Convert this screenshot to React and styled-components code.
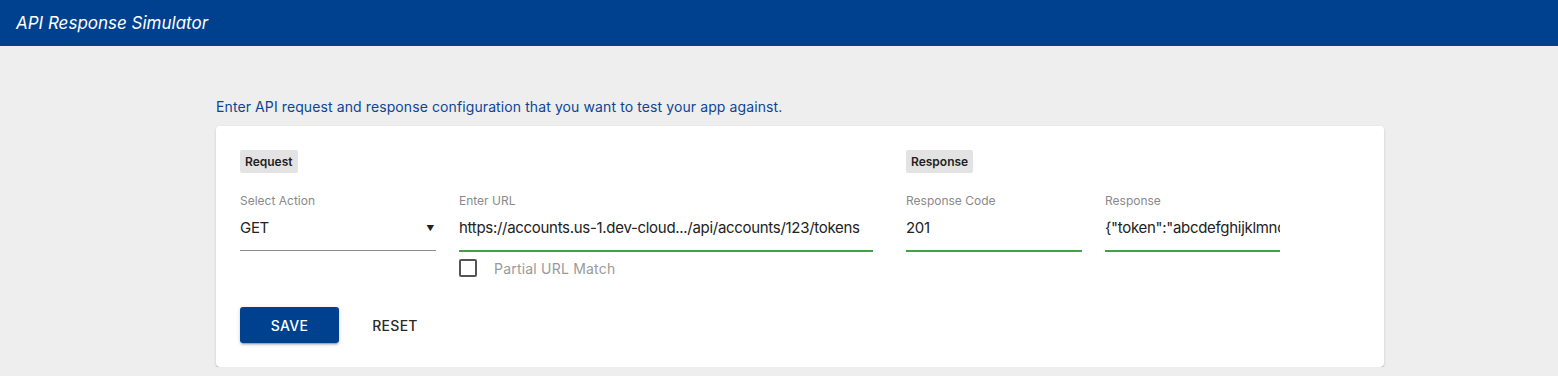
import React from 'react';
import styled, { createGlobalStyle } from 'styled-components';

const GlobalStyle = createGlobalStyle`
  body {
    margin: 0;
    background: #eeeeee;
    font-family: Inter, "Noto Sans", sans-serif;
    color: #222;
  }
`;

const Header = styled.header`
  height: 46px;
  background: #00418f;
  display: flex;
  align-items: center;
  padding-left: 16px;
`;

const Title = styled.h1`
  margin: 0;
  font-size: 17px;
  font-weight: 400;
  font-style: italic;
  color: #ffffff;
`;

const Main = styled.main`
  padding: 51px 0 0 216px;
`;

const Intro = styled.p`
  margin: 0 0 9px;
  font-size: 14px;
  line-height: 20px;
  letter-spacing: 0.1px;
  color: #0d4596;
`;

const Card = styled.section`
  width: 1168px;
  box-sizing: border-box;
  background: #ffffff;
  border-radius: 4px;
  padding: 24px;
  box-shadow: 0 2px 1px -1px rgba(0, 0, 0, 0.2), 0 1px 1px 0 rgba(0, 0, 0, 0.14),
    0 1px 3px 0 rgba(0, 0, 0, 0.12);
`;

const Sections = styled.div`
  display: flex;
  gap: 33px;
`;

const Section = styled.div`
  display: flex;
  flex-direction: column;
  align-items: flex-start;
`;

const Chip = styled.span`
  height: 23px;
  line-height: 23px;
  padding: 0 5px;
  background: #e3e3e3;
  border-radius: 2px;
  font-size: 12px;
  font-weight: 600;
  color: #1e1e1e;
`;

const Fields = styled.div`
  display: flex;
  gap: 23px;
  margin-top: 20px;
`;

const Field = styled.div`
  width: ${(p) => p.$width}px;
  display: flex;
  flex-direction: column;
`;

const Label = styled.label`
  font-size: 12px;
  line-height: 16px;
  color: #8a8a8a;
`;

const Value = styled.div`
  margin-top: 9px;
  padding-bottom: 12px;
  height: 20px;
  display: flex;
  align-items: center;
  justify-content: space-between;
  font-size: 15px;
  line-height: 20px;
  letter-spacing: -0.3px;
  color: #222;
  white-space: nowrap;
  overflow: hidden;
  border-bottom: ${(p) => (p.$focused ? '2px solid #43a047' : '1px solid #8c8c8c')};
`;

const Arrow = styled.span`
  font-size: 8px;
  color: #222;
  margin-right: 2px;
`;

const CheckRow = styled.label`
  display: flex;
  align-items: center;
  gap: 17px;
  margin-top: 7px;
  font-size: 14px;
  letter-spacing: 0.2px;
  color: #9a9a9a;
`;

const Box = styled.span`
  width: 14px;
  height: 14px;
  border: 2px solid #555;
  border-radius: 2px;
`;

const Actions = styled.div`
  display: flex;
  align-items: center;
  gap: 17px;
  margin-top: 30px;
`;

const Button = styled.button`
  height: 36px;
  min-width: ${(p) => (p.$primary ? '99px' : '78px')};
  padding: 0 16px;
  border: none;
  border-radius: 3px;
  font-family: inherit;
  font-size: 14px;
  font-weight: 500;
  letter-spacing: 0.3px;
  text-transform: uppercase;
  background: ${(p) => (p.$primary ? '#00418f' : 'transparent')};
  color: ${(p) => (p.$primary ? '#ffffff' : '#2a2a2a')};
  box-shadow: ${(p) =>
    p.$primary
      ? '0 3px 1px -2px rgba(0,0,0,0.2), 0 2px 2px 0 rgba(0,0,0,0.14), 0 1px 5px 0 rgba(0,0,0,0.12)'
      : 'none'};
`;

export default function App() {
  return (
    <>
      <GlobalStyle />
      <Header>
        <Title>API Response Simulator</Title>
      </Header>
      <Main>
        <Intro>Enter API request and response configuration that you want to test your app against.</Intro>
        <Card>
          <Sections>
            <Section>
              <Chip>Request</Chip>
              <Fields>
                <Field $width={196}>
                  <Label>Select Action</Label>
                  <Value>
                    GET
                    <Arrow>▼</Arrow>
                  </Value>
                </Field>
                <Field $width={414}>
                  <Label>Enter URL</Label>
                  <Value $focused>https://accounts.us-1.dev-cloud.../api/accounts/123/tokens</Value>
                  <CheckRow>
                    <Box />
                    Partial URL Match
                  </CheckRow>
                </Field>
              </Fields>
            </Section>
            <Section>
              <Chip>Response</Chip>
              <Fields>
                <Field $width={176}>
                  <Label>Response Code</Label>
                  <Value $focused>201</Value>
                </Field>
                <Field $width={175}>
                  <Label>Response</Label>
                  <Value $focused>{'{"token":"abcdefghijklmnopqrstuvwxyz"}'}</Value>
                </Field>
              </Fields>
            </Section>
          </Sections>
          <Actions>
            <Button $primary>Save</Button>
            <Button>Reset</Button>
          </Actions>
        </Card>
      </Main>
    </>
  );
}
